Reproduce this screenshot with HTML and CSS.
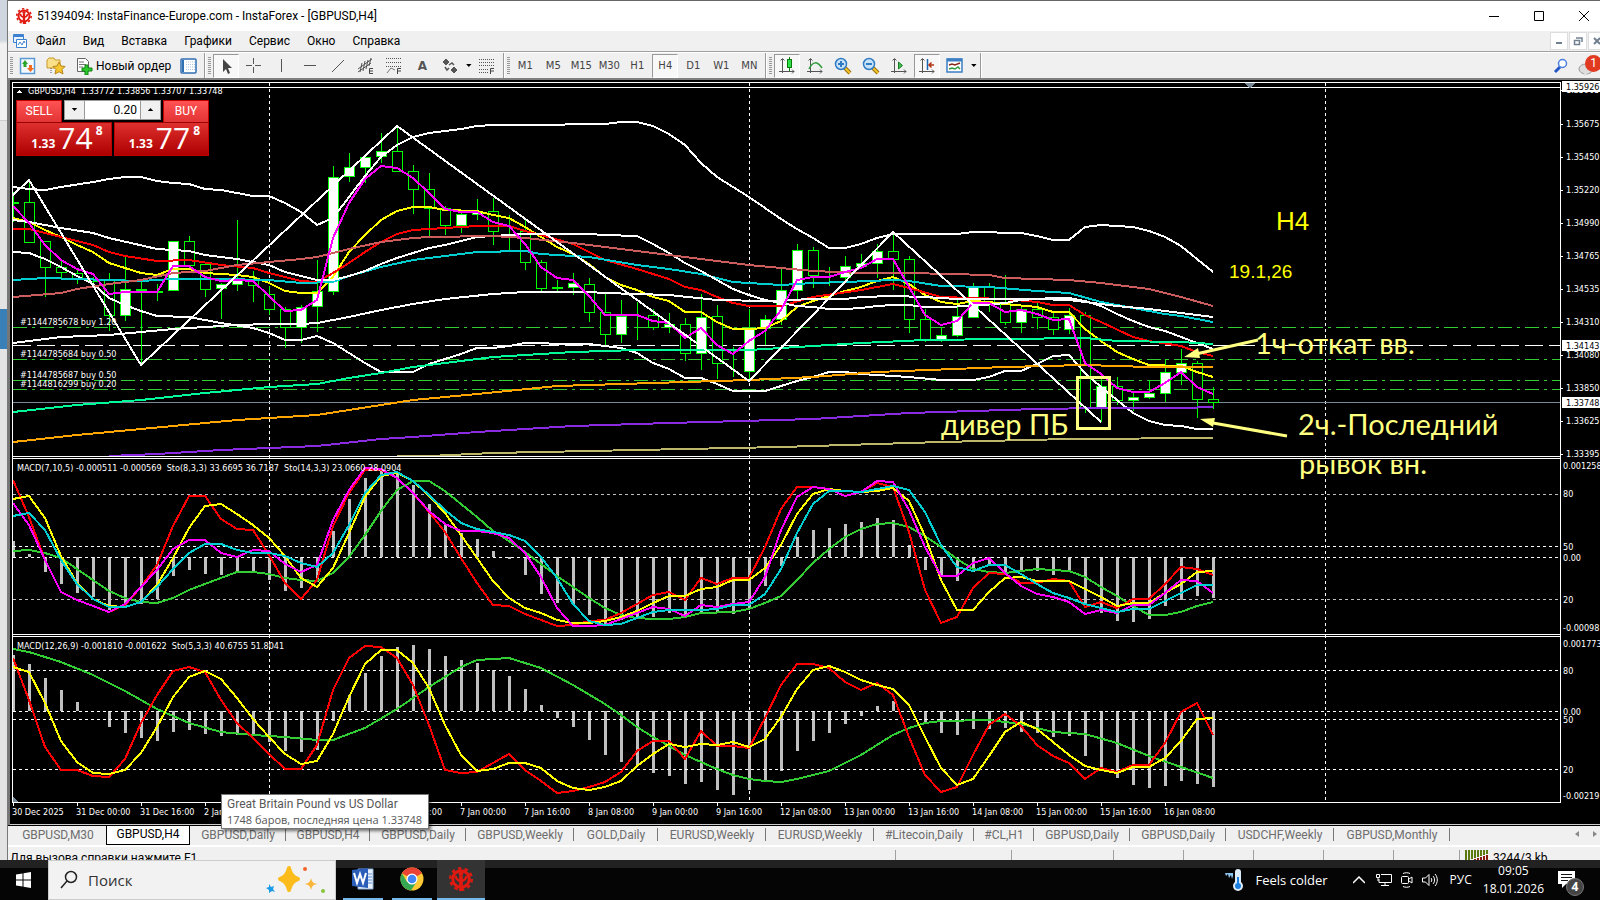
FILE: index.html
```html
<!DOCTYPE html>
<html lang="ru">
<head>
<meta charset="utf-8">
<title>InstaForex - [GBPUSD,H4]</title>
<link rel="stylesheet" href="styles.css">
</head>
<body>
<svg width="0" height="0" class="defs" aria-hidden="true">
  <defs>
    <symbol id="logo" viewBox="0 0 16 16"><g fill="none" stroke="#e01a10"><circle cx="8" cy="8" r="5.500" stroke-width="2"/><circle cx="8" cy="8" r="7.200" stroke-width="1.600" stroke-dasharray="2.300 2.220"/><path d="M8 16V6" stroke-width="2.400"/><path d="M8 9.500C6 9 4.500 8 4.500 6M8 9.500c2-.500 3.500-1.500 3.500-3.500" stroke-width="1.600"/></g><circle cx="8" cy="4.500" r="1.600" fill="#e01a10"/></symbol>
    <symbol id="axes" viewBox="0 0 18 18"><path d="M4.500 2v14M2.500 3.500l2-2 2 2M1 14.500h15M14 12.500l2 2-2 2" fill="none" stroke="#555"/></symbol>
    <symbol id="lens" viewBox="0 0 18 18"><path d="M11 11l5 5" stroke="#9a7010" stroke-width="4"/><path d="M11 11l5 5" stroke="#f2c52c" stroke-width="2"/><circle cx="7" cy="7" r="5.500" fill="#c9e4fa" stroke="#2f7bc4" stroke-width="1.500"/></symbol>
  </defs>
</svg>
<div class="screen">
  <div class="desktop"><i></i></div>
  <main class="window">
    <header class="title">
      <svg width="16" height="16"><use href="#logo"/></svg>
      <h1>51394094: InstaFinance-Europe.com - InstaForex - [GBPUSD,H4]</h1>
      <div class="wincontrols">
        <button aria-label="Свернуть"><svg width="12" height="12"><path d="M1 6.500h10" stroke="#000"/></svg></button>
        <button aria-label="Развернуть"><svg width="12" height="12"><path d="M1.500 1.500h9v9h-9z" fill="none" stroke="#000"/></svg></button>
        <button aria-label="Закрыть"><svg width="12" height="12"><path d="M1 1l10 10M11 1L1 11" stroke="#000"/></svg></button>
      </div>
    </header>
    <nav class="menu">
      <svg width="16" height="16" viewBox="0 0 16 16"><path d="M1.500 1.500h10v8h-10z" fill="#eaf3fd" stroke="#3c82d0"/><path d="M1 3h11" stroke="#3c82d0" stroke-width="2"/><path d="M4.500 6.500h10v8h-10z" fill="#fff" stroke="#3c82d0"/><path d="M6 12l2-3 2 3 2-4 1 2" fill="none" stroke="#3c82d0"/></svg>
      <button>Файл</button><button>Вид</button><button>Вставка</button><button>Графики</button><button>Сервис</button><button>Окно</button><button>Справка</button>
      <div class="mdi">
        <button aria-label="Свернуть окно"><svg width="10" height="10"><path d="M2 7h6" stroke="#708090" stroke-width="2"/></svg></button>
        <button aria-label="Восстановить окно"><svg width="10" height="10"><path d="M1.500 4.500h5v4h-5zM3 2h6v4" fill="none" stroke="#708090" stroke-width="1.500"/></svg></button>
        <button aria-label="Закрыть окно"><svg width="10" height="10"><path d="M2 2l6 6M8 2L2 8" stroke="#708090" stroke-width="2"/></svg></button>
      </div>
    </nav>
    <div class="toolbar">
      <i class="grip"></i>
      <button aria-label="Новый график"><svg width="18" height="18"><path d="M1.500 1.500h14v15h-14z" fill="#f3f9ff" stroke="#5b9bd5" stroke-width="1.500"/><path d="M3 7l3-4 3 4H7.500v3h-3V7z" fill="#2aa52a"/><path d="M8 11l3.500 4 3.500-4h-2V8h-3v3z" fill="#f06a20"/></svg></button>
      <button aria-label="Профили"><svg width="20" height="18"><path d="M1 3l2-2h5l1 2h5v8H1z" fill="#fbe08a" stroke="#c79a2a"/><path d="M5 11v6" stroke="#555" stroke-dasharray="1 1"/><path d="M13 5l2 4 4 .500-3 3 1 4.500-4-2.300L9 17l1-4.500-3-3 4-.500z" fill="#f7c530" stroke="#b58415"/></svg></button>
      <button class="order"><svg width="18" height="18"><path d="M1.500 1.500h8l3 3v10h-11z" fill="#fff" stroke="#666"/><path d="M3 5h5M3 7.500h7M3 10h4" stroke="#777"/><path d="M9 8h3v3h4v3h-4v4H9v-4H6v-3h3z" fill="#2bc92b" stroke="#128012"/></svg>Новый ордер</button>
      <button class="market" aria-label="Обзор рынка"><svg width="18" height="16"><rect x="1" y="1" width="15" height="14" rx="1" fill="#fff" stroke="#2f6fb3" stroke-width="1.500"/><path d="M3 2v12" stroke="#2f6fb3" stroke-width="2"/><path d="M6 4h9M6 6.500h9M6 9h9M6 11.500h9" stroke="#aac6e6" stroke-dasharray="1 1"/></svg></button>
      <i class="split"></i><i class="grip"></i>
      <button class="on" aria-label="Курсор"><svg width="18" height="18"><path d="M6 2v13l3-3 2 5 2-1-2-5h4z" fill="#444"/></svg></button>
      <button aria-label="Перекрестие"><svg width="18" height="18"><path d="M8.500 1v6M8.500 10v6M1 8.500h6M10 8.500h6" stroke="#555"/></svg></button>
      <button aria-label="Вертикальная линия"><svg width="18" height="18"><path d="M8.500 2v13" stroke="#555"/></svg></button>
      <button aria-label="Горизонтальная линия"><svg width="18" height="18"><path d="M3 8.500h12" stroke="#555"/></svg></button>
      <button aria-label="Трендовая линия"><svg width="18" height="18"><path d="M3 15L15 3" stroke="#555"/></svg></button>
      <button aria-label="Канал"><svg width="18" height="18"><path d="M1 12L15 2M1 15L14 6M3 15l2-9M6 14L8 4M9 12l2-9M12 9l2-8" stroke="#555" fill="none"/><path d="M16 11.500h-3.500v5H16M12.500 14H16" stroke="#444" fill="none"/></svg></button>
      <button aria-label="Фибоначчи"><svg width="18" height="18"><path d="M1 1.500h15M1 5.500h15M1 9.500h15" stroke="#555" stroke-dasharray="1 1"/><path d="M2 16l4-5 4 2" stroke="#777" fill="none"/><path d="M16 11.500h-3.500v5.500M12.500 14H16" stroke="#444" fill="none"/></svg></button>
      <button class="letter">A</button>
      <button aria-label="Стрелки"><svg width="18" height="18"><path d="M2 5l3-3 3 3-3 3zM10 13l3-3 3 3-3 3z" fill="#555" stroke="#555"/><path d="M4 10l2 3 2-2M8 8l3-2 2 2" fill="none" stroke="#555" stroke-width="1.500"/></svg></button><i class="caret"></i>
      <button aria-label="Линии Фибоначчи"><svg width="18" height="18"><path d="M1 2.500h15M1 5.500h15M1 8.500h15M1 12.500h9M1 15.500h9" stroke="#555" stroke-dasharray="1 1"/><path d="M16 11.500h-3.500v5.500M12.500 14H16" stroke="#444" fill="none"/></svg></button>
      <i class="split"></i><i class="grip"></i>
      <button>M1</button><button>M5</button><button>M15</button><button>M30</button><button>H1</button><button class="on">H4</button><button>D1</button><button>W1</button><button>MN</button>
      <i class="split"></i><i class="grip"></i>
      <button class="on" aria-label="Свечи"><svg width="18" height="18"><use href="#axes"/><path d="M11.500 0v14" stroke="#0a7a0a"/><rect x="9.500" y="2.500" width="4" height="8" fill="#2ee04a" stroke="#0a7a0a"/></svg></button>
      <button aria-label="Линия"><svg width="18" height="18"><use href="#axes"/><path d="M3 12c4-8 8-8 13-1" fill="none" stroke="#2f9a3c" stroke-width="1.500"/></svg></button>
      <button aria-label="Увеличить"><svg width="18" height="18"><use href="#lens"/><path d="M4 7h6M7 4v6" stroke="#2f7bc4" stroke-width="2"/></svg></button>
      <button aria-label="Уменьшить"><svg width="18" height="18"><use href="#lens"/><path d="M4 7h6" stroke="#2f7bc4" stroke-width="2"/></svg></button>
      <button aria-label="Автопрокрутка"><svg width="18" height="18"><use href="#axes"/><path d="M8.500 5l4 3.500-4 3.500z" fill="#3fc04e" stroke="#1a7a28"/></svg></button>
      <button class="on" aria-label="Сдвиг графика"><svg width="18" height="18"><use href="#axes"/><path d="M9.500 2v11" stroke="#1a66b0" stroke-width="1.500"/><path d="M16 8h-5M13.500 5.500L11 8l2.500 2.500" stroke="#b33415" stroke-width="1.500" fill="none"/></svg></button>
      <button aria-label="Шаблоны"><svg width="18" height="18"><rect x="1" y="2" width="15" height="13" fill="#fff" stroke="#3b7ec4" stroke-width="1.500"/><path d="M1 3h15" stroke="#3b7ec4" stroke-width="3"/><path d="M3 8l3-1 3 1 5-2" stroke="#8a2a1a" fill="none" stroke-width="1.500"/><path d="M3 12l3-1 3 1 3-2 2 2" stroke="#2f9a3c" fill="none" stroke-width="1.500"/></svg></button><i class="caret"></i>
      <i class="split"></i>
      <div class="tools-right">
        <button aria-label="Поиск"><svg width="16" height="16"><path d="M2 14l5-5" stroke="#2456c8" stroke-width="3"/><circle cx="9.500" cy="5.500" r="4" fill="#fff" stroke="#4a7fe0" stroke-width="1.500"/></svg></button>
        <button aria-label="Уведомления"><svg width="22" height="22"><ellipse cx="8" cy="14" rx="7" ry="5" fill="#ddd" stroke="#999"/><path d="M6 18v3l4-3" fill="#ddd"/></svg><b class="badge">1</b></button>
      </div>
    </div>
    <section class="chart">
      <svg id="plot" class="plot" role="img" aria-label="GBPUSD,H4"></svg>
      <svg id="scale" class="scale" role="img" aria-label="Шкала цен"></svg>
      <div class="trade">
        <button class="side sell"><span class="word">SELL</span><span class="quote"><small>1.33</small><strong>74</strong><sup>8</sup></span></button>
        <button class="side buy"><span class="word">BUY</span><span class="quote"><small>1.33</small><strong>77</strong><sup>8</sup></span></button>
        <div class="volume"><button aria-label="Меньше"><i class="caret"></i></button><input aria-label="Объём" value="0.20"><button aria-label="Больше"><i class="caret up"></i></button></div>
      </div>
      <div class="tip"><div>Great Britain Pound vs US Dollar</div><div class="bars">1748 баров, последняя цена 1.33748</div></div>
    </section>
    <nav class="tabs">
      <button class="w96">GBPUSD,M30</button><button class="w84 active">GBPUSD,H4</button><button class="w96">GBPUSD,Daily</button><button class="w84">GBPUSD,H4</button><button class="w96">GBPUSD,Daily</button><button class="w108">GBPUSD,Weekly</button><button class="w84">GOLD,Daily</button><button class="w108">EURUSD,Weekly</button><button class="w108">EURUSD,Weekly</button><button class="w100">#Litecoin,Daily</button><button class="w60">#CL,H1</button><button class="w96">GBPUSD,Daily</button><button class="w96">GBPUSD,Daily</button><button class="w108">USDCHF,Weekly</button><button class="w116">GBPUSD,Monthly</button>
      <span class="scroller"><i></i><i></i></span>
    </nav>
    <footer class="status">
      <span class="help">Для вызова справки нажмите F1</span><span class="c116"></span><span class="c102"></span><span class="c70"></span><span class="c70"></span><span class="c70"></span><span class="c70"></span><span class="c66"></span>
      <span class="traffic"><svg width="24" height="14"><path d="M1 0v11M4 0v10M7 0v9M10 0v8M13 0v7M16 0v6M19 0v5M22 0v4" stroke="#5a7a10" stroke-width="2"/><path d="M1 12v2M4 11v3M7 10v4M10 9v5M13 8v6M16 7v7M19 6v8M22 5v9" stroke="#8a1a10" stroke-width="2"/></svg>3244/3 kb</span>
    </footer>
  </main>
</div>
<div class="taskbar">
  <button class="start" aria-label="Пуск"><svg width="16" height="16"><path d="M0 2.500l6.500-1v6H0zM7.500 1.300L15 0v7.500H7.500zM0 8.500h6.500v6L0 13.500zM7.500 8.500H15V16l-7.500-1.300z" fill="#fff"/></svg></button>
  <label class="search"><svg width="18" height="20"><circle cx="11" cy="7" r="5.500" fill="none" stroke="#222" stroke-width="1.500"/><path d="M7 11l-6 7" stroke="#222" stroke-width="1.500"/></svg><input placeholder="Поиск" aria-label="Поиск">
    <svg width="62" height="30"><path d="M24 3q2 9 9 11-7 2-9 11-2-9-9-11 7-2 9-11z" fill="#fbbc1c" stroke="#fbbc1c" stroke-width="4" stroke-linejoin="round"/><path d="M46 13c1 4 2 5 6 6-4 1-5 2-6 6-1-4-2-5-6-6 4-1 5-2 6-6z" fill="#f9b83c"/><path d="M4 19l2 3 3-1-1 3 2 3-3-1-3 2v-3l-3-2 3-1z" fill="#1a9be8"/><circle cx="40" cy="4" r="2" fill="#f2642a"/><circle cx="58" cy="26" r="2" fill="#8ac43c"/></svg></label>
  <button class="app" aria-label="Word"><svg width="24" height="24"><path d="M7 2h15v20H7z" fill="#e8f0fb" stroke="#8fb2de"/><path d="M16 7h5M16 10h5M16 13h5M16 16h5" stroke="#5b8fd0"/><path d="M1 3l16-2v20L1 19z" fill="#2b5eb8"/><path d="M3 6l3 10L9 7l3 9 3-10" stroke="#fff" stroke-width="2" fill="none"/></svg></button>
  <button class="app" aria-label="Chrome"><svg width="24" height="24"><circle cx="12" cy="12" r="11.500" fill="#fcc934"/><path d="M2 6.200A11.500 11.500 0 0 1 22 6.200L12 12z" fill="#ea4335"/><path d="M2 6.200A11.500 11.500 0 0 0 11 23.500L16.500 15 12 12 7 15z" fill="#34a853"/><path d="M2 6.200h20L12 7z" fill="#ea4335"/><circle cx="12" cy="12" r="5.500" fill="#fff"/><circle cx="12" cy="12" r="4.300" fill="#4285f4"/></svg></button>
  <button class="app current" aria-label="InstaForex"><svg width="24" height="24"><use href="#logo"/></svg></button>
  <div class="tray">
    <button class="weather"><svg width="22" height="22"><path d="M1 4h8v3l-1 3-1-4-2 3-1-4-2 2z" fill="#8cc4f0"/><rect x="11" y="0" width="6" height="17" rx="3" fill="#dcebf8"/><circle cx="14" cy="17" r="5" fill="#dcebf8"/><circle cx="14" cy="17" r="3" fill="#1a7fe0"/><path d="M14 8v9" stroke="#1a7fe0" stroke-width="2"/></svg>Feels colder</button>
    <svg width="12" height="8"><path d="M0 7l6-6 6 6" fill="none" stroke="#fff" stroke-width="1.500"/></svg>
    <svg width="18" height="14"><path d="M7 1.500h10.500v8H5V6M7 12.500h8M11 10v3M2.500 1.500h3v3h-3zM4 5v3" fill="none" stroke="#fff"/></svg>
    <svg width="12" height="16"><rect x=".500" y="4.500" width="7" height="7" rx="1" fill="none" stroke="#fff"/><path d="M8 7l3-2v6L8 9M2 1.500c2-1 5-1 7 0M2 14.500c2 1 5 1 7 0" fill="none" stroke="#fff"/></svg>
    <svg width="16" height="14"><path d="M.500 5h3L7 1.500v11L3.500 9h-3zM9 5c1 1 1 3 0 4M11 3c2 2 2 6 0 8M13 1c3 3 3 9 0 12" fill="none" stroke="#fff"/></svg>
    <span class="lang">РУС</span>
    <time>09:05<br>18.01.2026</time>
    <button class="notes" aria-label="Уведомления"><svg width="18" height="18"><path d="M0 0h17v13H8l-4 4v-4H0z" fill="#fff"/><path d="M3 3.500h11M3 6.500h11M3 9.500h7" stroke="#111"/></svg><b>4</b></button>
  </div>
</div>
<script src="chart.js"></script>
</body>
</html>
```

FILE: styles.css
```css
* { box-sizing: border-box; }
body { margin: 0; height: 100vh; display: flex; flex-direction: column; overflow: hidden; font: 12px/16px Roboto, "Noto Sans", sans-serif; color: #000; background: #000; }
button { font: inherit; color: inherit; border: 0; padding: 0; background: none; }
svg { display: block; flex: none; }
.defs { position: absolute; }
.screen { flex: 1; min-height: 0; display: flex; overflow: hidden; }
.desktop { width: 7px; background: linear-gradient(#cfd6df 0 40px, #f0f0f0 44px 120px, #ccc 120px 121px, #e4e3e3 121px); padding-top: 309px; }
.desktop i { display: block; height: 40px; background: #3a80b8; }
.window { flex: 1; min-width: 0; border-left: 1px solid #777; display: flex; flex-direction: column; background: #f0f0f0; }
.window > * { flex: none; }

.title { height: 31px; border-top: 1px solid #666; background: #fff; display: flex; align-items: center; gap: 5px; padding-left: 8px; }
.title h1 { margin: 0; font-size: 12px; font-weight: 400; }
.wincontrols { margin-left: auto; margin-right: -6px; display: flex; }
.wincontrols button { width: 45px; height: 30px; display: grid; place-items: center; }

.menu { height: 21px; border-bottom: 1px solid #a0a0a0; display: flex; align-items: center; padding-left: 4px; }
.menu > button { margin-left: 17px; }
.menu > svg { margin-right: -9px; }
.mdi { margin-left: auto; display: flex; gap: 1px; margin-right: -6px; }
.mdi button { width: 18px; height: 18px; background: #fff; border: 1px solid #ddd; display: grid; place-items: center; }

.toolbar { height: 28px; border-top: 1px solid #fff; border-bottom: 2px solid #808080; display: flex; align-items: center; font: 10px/12px "DejaVu Sans", sans-serif; color: #444; }
.toolbar button { width: 28px; height: 24px; display: grid; place-items: center; position: relative; }
.toolbar .on { width: 26px; margin: 0 1px; background: #f8f8f8; border: 1px solid; border-color: #999 #fff #fff #999; }
.toolbar .order { width: auto; display: flex; align-items: center; gap: 2px; padding: 0 5px 0 6px; font: 12px/16px Roboto, sans-serif; color: #000; }
.toolbar .market { width: 26px; }
.toolbar .letter { font-weight: 700; font-size: 12px; color: #555; }
.grip { width: 3px; height: 18px; margin: 0 1px 0 2px; background: repeating-linear-gradient(#999 0 1px, #f0f0f0 1px 2px); }
.split { width: 2px; height: 25px; margin-left: 2px; border-left: 1px solid #999; border-right: 1px solid #fff; }
.caret { display: inline-block; width: 9px; height: 3px; background: #000; clip-path: polygon(20% 0, 80% 0, 50% 100%); }
.caret.up { clip-path: polygon(20% 100%, 80% 100%, 50% 0); }
.tools-right { margin-left: auto; display: flex; margin-right: -3px; }
.badge { position: absolute; right: 1px; top: 1px; width: 17px; height: 17px; border-radius: 50%; background: #e23a20; color: #fff; font: 12px/17px Roboto, sans-serif; text-align: center; }

.chart { position: relative; height: 745px; display: flex; background: #000; border-left: 2px solid #777; }
.plot { flex: 1; min-width: 0; height: 744px; }
.scale { width: 40px; height: 744px; }
.chart::after { content: ""; position: absolute; left: 0; right: 0; bottom: 0; height: 1px; background: #ccc; }
.chart text { font: 9px "DejaVu Sans Condensed", "Noto Sans", sans-serif; fill: #fff; }
.chart .note { font: 29px Lato, "Open Sans", sans-serif; fill: #ffff80; }
.chart .big { font: 26px "Liberation Sans", sans-serif; fill: #ff0; }
.chart .mid { font: 19px "Liberation Sans", sans-serif; fill: #ff0; }
.chart .dark { fill: #000; }

.trade { position: absolute; left: 6px; top: 20px; width: 193px; height: 56px; display: flex; gap: 2px; color: #fff; }
.side { flex: 1; display: flex; flex-direction: column; color: #fff; }
.side.buy { align-items: flex-end; }
.word { width: 46px; height: 22px; font-size: 12px; line-height: 20px; text-align: center; background: linear-gradient(#ff5252, #e23434); border: 1px solid #c00000; border-bottom: 0; }
.quote { width: 100%; height: 34px; display: flex; justify-content: flex-end; align-items: flex-end; gap: 3px; padding: 0 8px 5px 0; background: linear-gradient(#df3030, #ae0000); border: 1px solid #c00000; border-top-color: #900; }
.quote small { font: 700 12px/12px "Open Sans", sans-serif; }
.quote strong { font: 30px/24px "Open Sans", sans-serif; }
.quote sup { font: 700 12px/12px "Open Sans", sans-serif; align-self: flex-start; margin-top: 2px; }
.volume { position: absolute; left: 48px; top: 0; width: 97px; height: 20px; display: flex; background: #f0f0f0; border: 1px solid #999; }
.volume button { width: 19px; }
.volume .caret { vertical-align: 3px; }
.volume input { flex: 1; min-width: 0; border: 1px solid #999; border-width: 0 1px; font: 12px Roboto, sans-serif; text-align: right; padding: 0 3px; }

.tip { position: absolute; left: 211px; top: 714px; width: 208px; height: 35px; z-index: 2; background: #fff; border: 1px solid #767676; box-shadow: 2px 2px 3px #0008; color: #575757; line-height: 15px; padding: 2px 5px; white-space: nowrap; }
.bars { font-family: "Open Sans", sans-serif; font-size: 11px; }

.tabs { height: 21px; border-top: 1px solid #000; border-bottom: 1px solid #fff; display: flex; color: #6d6d6d; padding-left: 2px; }
.tabs button { height: 19px; line-height: 16px; position: relative; white-space: nowrap; padding-bottom: 2px; }
.tabs button::after { content: ""; position: absolute; right: 0; top: 2px; width: 1px; height: 13px; background: #777; }
.tabs .active { background: #fff; color: #000; border: 1px solid #000; border-top: 0; }
.tabs .active::after, .tabs button:first-child::after { display: none; }
.w60 { width: 60px; } .w84 { width: 84px; } .w96 { width: 96px; } .w100 { width: 100px; } .w108 { width: 108px; } .w116 { width: 116px; }
.scroller { margin-left: auto; display: flex; gap: 14px; padding: 5px 3px; }
.scroller i { width: 4px; height: 6px; background: #888; clip-path: polygon(100% 0, 100% 100%, 0 50%); }
.scroller i + i { clip-path: polygon(0 0, 0 100%, 100% 50%); }

.status { height: 24px; display: flex; border-top: 1px solid #fff; padding-top: 3px; }
.status span { border-left: 1px solid #a0a0a0; }
.status .help { flex: 1; border: 0; padding-left: 2px; }
.status .traffic { width: 141px; display: flex; gap: 4px; padding-left: 5px; }
.c116 { width: 116px; } .c102 { width: 102px; } .c70 { width: 70px; } .c66 { width: 66px; }

.taskbar { flex: none; height: 40px; display: flex; color: #fff; background: linear-gradient(#222 8px, #050505 8px); }
.start { width: 48px; padding-left: 16px; }
.search { width: 288px; background: #f2f2f2; border: 1px solid #ccc; display: flex; align-items: center; padding: 0 8px 0 11px; }
.search input { flex: 1; min-width: 0; border: 0; background: none; font: 15px "Open Sans", sans-serif; padding: 0 0 0 10px; }
.search input::placeholder { color: #333; opacity: 1; }
.app { width: 40px; margin: 0 0 0 7px; border-bottom: 2px solid #76b9ed; display: grid; place-items: center; }
.app + .app { margin-left: 9px; }
.app + .app.current { width: 48px; margin-left: 5px; background: #333; }
.tray { margin-left: auto; display: flex; align-items: center; gap: 9px; padding-right: 16px; font-family: "Open Sans", sans-serif; }
.weather { display: flex; align-items: center; gap: 10px; font-size: 13px; margin-right: 16px; }
.lang { margin-left: 3px; }
.tray time { text-align: center; line-height: 18px; margin-left: 2px; margin-right: 5px; }
.notes { position: relative; width: 26px; height: 22px; }
.notes b { position: absolute; right: 0; bottom: -5px; width: 18px; height: 18px; border-radius: 50%; background: #444; border: 1px solid #777; font: 700 12px/16px "Open Sans", sans-serif; }
```

FILE: chart.js
```js
const STEP = 16, X0 = 13;
const bx = k => X0 + STEP * k;

// high, top, bottom, low, filled
const candles = [
[192,202,203,222,0],[180,202,242,243,0],[241,241,267,297,0],[260,267,272,280,0],[270,273,279,284,0],[277,279,281,284,0],[273,280,315,331,0],[257,289,315,321,1],[280,289,290,363,0],[284,291,292,301,0],
[241,241,290,291,1],[236,241,265,267,0],[263,264,289,297,0],[283,284,288,319,1],[220,279,284,291,1],[271,280,285,302,0],[286,294,309,315,0],[307,309,327,348,0],[305,307,327,343,1],[260,291,306,332,1],
[166,177,291,295,1],[153,167,176,182,1],[155,157,167,183,1],[133,151,156,163,1],[127,151,171,172,0],[165,171,189,214,0],[173,189,208,236,0],[206,208,225,235,0],[210,214,225,233,1],[199,211,214,220,1],
[198,211,231,245,0],[215,231,231,250,0],[220,231,262,270,0],[260,262,288,292,0],[280,287,288,291,0],[273,283,287,295,1],[278,284,312,322,0],[294,312,334,346,0],[300,316,334,343,1],[302,315,315,340,0],
[309,315,327,330,0],[313,324,327,333,1],[318,324,353,361,0],[294,317,353,370,1],[305,316,363,379,0],[347,363,363,377,0],[309,329,371,379,1],[315,319,328,345,1],[268,290,319,325,1],[244,250,290,300,1],
[247,250,275,288,0],[267,276,276,286,0],[256,266,277,280,1],[254,263,266,268,1],[244,251,263,278,1],[233,251,259,290,0],[256,259,319,333,0],[309,319,339,342,0],[327,335,339,342,1],[299,316,335,337,1],
[283,286,317,318,1],[283,286,303,312,0],[275,303,322,325,0],[306,309,322,333,1],[303,309,317,329,0],[313,317,329,335,0],[308,315,329,334,1],[312,315,407,413,0],[377,386,407,422,1],[377,386,400,405,0],
[392,397,400,411,1],[380,393,397,399,1],[359,372,393,402,1],[349,363,372,385,1],[361,363,399,418,0],[387,399,402,409,0]];

// Each series is a flat list of bar index, y.
const main = [
['#fff',[0,187,1,189,2,190,3,187,5,182,6,179,7,177,8,177,9,181,10,183,11,184,12,189,13,190,14,193,15,196,16,196,17,203,18,212,19,225,20,218,21,197,22,176,23,157,24,145,25,137,26,133,27,131,28,129,29,126,30,125,34,125,35,124,37,124,38,122,39,122,40,126,41,134,42,145,43,163,44,177,45,187,46,197,47,208,48,219,49,229,50,238,51,248,52,248,53,244,54,238,55,234,59,234,60,232,61,232,62,233,63,233,64,236,65,240,66,240,67,227,68,225,69,226,70,227,71,231,72,237,73,246,74,259,75,272]],
['#fff',[0,252,1,253,2,259,3,267,4,276,5,284,6,298,7,305,8,311,9,316,11,317,12,320,13,323,15,328,16,333,17,340,18,340,19,336,20,343,21,353,22,363,23,372,25,372,26,364,27,359,28,354,29,348,30,348,31,346,32,343,33,343,34,344,36,344,37,346,38,348,39,353,40,363,41,369,42,378,43,378,44,384,45,391,47,391,48,386,49,381,50,377,51,372,52,372,53,374,54,375,56,377,58,380,60,380,61,377,62,371,63,371,64,364,65,356,66,355,67,373,68,387,69,400,70,413,71,421,72,425,73,426,74,429,75,429]],
['#ff0',[0,218,1,222,2,230,3,237,4,245,5,252,6,263,7,268,8,273,9,275,10,269,11,269,12,273,14,275,15,277,16,283,17,291,18,293,19,293,20,277,21,252,22,235,23,220,24,211,25,207,26,207,27,210,29,211,30,215,31,218,32,227,33,237,34,247,35,254,36,264,37,277,38,285,39,290,40,297,41,301,42,312,43,312,44,322,45,329,46,329,47,328,48,321,49,307,50,301,51,296,52,291,53,287,54,281,55,277,56,284,57,295,58,302,59,304,60,301,61,302,62,304,64,307,65,312,66,312,67,329,68,341,69,352,70,359,71,365,73,366,74,372,75,377]],
['#f00',[0,229,1,229,3,237,5,245,6,252,7,256,9,261,11,260,13,265,15,268,16,273,17,277,18,281,19,282,20,273,21,263,22,252,23,242,24,234,25,230,26,229,28,227,29,226,31,226,32,231,33,235,35,244,37,260,39,269,41,279,42,287,43,290,44,297,45,303,46,306,48,306,50,297,53,290,55,284,56,288,58,297,62,299,64,302,65,305,66,305,67,315,68,322,70,337,71,341,73,346,74,352,75,356]],
['#00ced1',[0,280,2,278,8,281,10,279,13,279,16,280,18,283,20,282,21,276,23,267,25,260,27,256,29,252,32,251,33,254,36,257,39,265,41,269,43,274,45,282,48,285,50,283,52,282,55,280,56,281,58,286,61,287,64,291,66,293,68,302,70,308,72,314,73,316,75,322]],
['#fff',[0,220,1,222,2,225,3,228,5,233,6,238,9,249,11,251,12,255,14,259,16,265,17,272,18,276,19,280,20,280,21,276,22,271,23,264,24,258,25,253,26,248,27,245,28,241,29,237,31,235,32,234,36,234,37,235,39,236,40,244,41,253,42,263,43,271,44,280,45,289,46,295,47,300,48,303,49,306,50,307,51,309,52,309,53,308,54,306,55,305,56,305,57,307,58,307,60,306,62,303,63,300,64,299,65,298,66,298,67,301,68,306,69,314,70,321,71,327,72,331,73,337,74,343,75,349]],
['#fff',[0,343,1,341,3,337,6,335,8,332,10,329,12,327,14,325,16,324,18,324,19,323,21,317,23,310,25,304,27,299,30,294,32,292,36,292,37,293,41,295,44,300,47,301,50,299,52,299,53,297,55,296,57,297,59,299,64,299,66,300,67,302,69,306,71,309,73,313,75,317]],
['#cd5c5c',[0,297,3,293,4,289,6,284,8,280,10,273,12,271,14,265,16,262,18,259,19,257,21,249,23,242,25,238,26,237,30,236,32,238,35,243,38,249,42,257,46,265,50,271,53,273,56,273,61,275,62,278,66,280,68,283,71,289,73,297,75,306]],
['#00fa9a',[0,412,4,405,8,400,12,393,16,387,19,384,21,378,23,373,25,367,27,363,30,357,35,352,39,350,46,350,50,346,53,343,57,340,62,339,67,338,69,341,73,342,75,344]],
['#ffa500',[0,442,4,435,8,429,12,423,14,420,19,415,25,400,29,394,34,386,40,383,46,380,50,377,54,372,62,367,67,365,71,367,75,367]],
['#8a2be2',[6,456,9,454,13,450,19,446,23,439,25,437,29,432,35,426,41,423,50,419,56,413,64,409,68,408,73,408,75,407]],
['#bdb76b',[24,456,26,456,30,453,36,451,42,449,48,447,50,446,58,442,66,439,75,438]],
['#f0f',[0,206,1,223,2,245,3,260,4,269,5,274,6,294,7,292,9,292,10,266,11,266,12,277,13,281,14,280,15,281,16,296,17,311,18,310,19,300,20,238,21,203,22,179,23,166,24,168,25,178,26,193,27,209,28,212,29,212,30,222,31,226,32,244,33,267,34,278,35,280,36,296,37,315,39,315,40,321,41,323,42,338,43,328,44,345,45,354,46,341,47,331,48,310,49,280,50,277,51,277,52,272,53,268,54,259,55,259,56,287,57,315,58,325,59,321,60,303,61,303,62,312,63,310,64,314,65,320,66,319,67,363,68,374,69,388,70,392,71,392,72,383,73,372,74,387,75,394]],
['#fff',[0,195,1,180,8,365,24,126,46,381,55,232,68,422]]];

const hist1 = [541,554,572,584,593,597,610,606,604,599,576,570,574,575,573,572,580,591,588,582,531,499,478,470,473,485,504,525,533,539,551,559,575,594,603,605,615,626,620,617,617,613,617,613,613,614,609,586,566,537,530,528,524,522,518,520,545,570,577,581,572,565,573,571,571,575,572,604,613,621,622,619,606,600,596,598];
const hist2 = [655,664,678,690,702,711,727,733,738,741,732,730,734,736,735,735,742,751,752,750,721,695,673,656,647,645,649,656,660,663,670,676,689,705,718,727,740,755,762,765,773,776,784,782,790,795,790,782,771,751,741,733,724,716,706,701,711,724,733,735,729,729,728,732,733,737,736,756,770,778,785,788,786,781,784,787];
const seq = a => a.flatMap((y, k) => [k, y]);
const osc1 = [
['#32cd32',[0,551,1,550,2,553,3,558,4,569,5,580,6,591,7,598,8,602,9,603,10,598,11,590,12,584,13,578,14,572,15,572,16,574,17,578,18,580,19,581,20,573,21,557,22,535,23,511,24,490,25,481,26,481,27,491,28,504,29,517,30,531,31,541,32,552,33,564,34,576,35,587,36,598,37,608,38,615,39,618,40,619,41,619,42,617,43,613,45,612,46,609,47,603,48,596,49,580,50,563,51,549,52,537,53,529,54,524,55,523,56,527,57,536,58,547,59,559,60,569,61,572,62,573,63,571,64,569,65,570,66,571,67,577,68,587,69,596,70,606,71,615,72,615,73,612,74,606,75,602]],
['#f00',seq([480,517,560,592,600,606,612,605,587,565,526,496,496,519,529,530,555,583,599,580,526,493,470,470,478,493,512,532,558,583,605,606,614,620,626,625,621,620,613,604,595,592,600,578,584,578,578,547,509,487,487,489,496,492,483,487,532,590,623,617,588,573,574,583,583,579,581,607,602,608,599,599,584,567,569,575])],
['#ff0',seq([499,496,518,556,583,599,606,607,602,585,558,528,506,504,514,525,538,556,578,587,568,533,497,476,473,481,496,513,535,558,581,598,608,613,620,623,623,621,617,611,603,596,596,589,587,580,580,568,545,514,494,489,491,492,491,488,501,536,580,610,610,592,578,577,581,581,581,589,597,606,603,603,593,584,572,571])],
['#f0f',seq([503,525,560,592,600,606,612,604,587,570,549,540,540,553,557,550,551,564,572,565,520,490,468,469,478,493,511,524,531,531,533,538,553,577,608,626,626,625,619,613,607,609,616,605,607,604,602,577,530,497,487,489,496,492,481,482,510,547,576,576,563,558,573,586,594,597,602,614,610,613,605,605,593,580,581,593])],
['#00ced1',seq([516,513,530,560,584,599,607,607,602,587,569,553,544,544,550,553,553,556,563,567,553,525,493,475,472,481,495,510,523,529,532,535,541,557,578,604,621,625,624,618,612,610,610,610,609,605,605,594,569,533,504,491,491,492,489,486,490,512,545,567,571,565,565,574,584,593,598,604,608,612,609,609,601,593,585,585])]];
const osc2 = [
['#32cd32',[0,649,1,652,3,662,5,675,7,691,9,709,11,723,13,732,15,735,17,737,19,740,20,740,22,728,24,709,26,687,28,667,29,660,31,658,33,668,35,685,37,704,38,715,39,727,40,737,42,755,44,769,45,775,46,779,47,781,48,782,49,779,51,771,53,755,55,735,56,728,57,723,58,721,61,720,63,724,65,732,67,734,69,743,71,756,73,767,75,778]],
['#f00',seq([658,700,747,770,770,776,777,759,723,695,671,667,672,700,723,738,754,769,769,745,690,658,646,647,658,685,725,770,773,772,763,754,770,781,793,791,787,782,772,751,741,741,759,731,746,746,748,718,685,664,664,668,682,690,683,695,737,775,792,787,755,725,714,726,745,756,763,779,768,772,765,765,743,712,703,735])],
['#ff0',seq([667,672,703,741,762,773,774,770,753,727,697,677,671,679,698,719,737,754,764,761,734,697,664,650,650,663,688,725,755,771,769,763,763,768,781,788,790,787,781,766,754,744,747,744,745,742,747,739,717,689,670,666,672,680,685,689,705,737,768,785,779,756,732,722,729,742,755,766,770,773,767,767,758,741,719,718])]];

const FAR = 4000;
const seg = (x1, y1, x2, y2, c, w = 1, d = '') => `<line x1="${x1}" y1="${y1}" x2="${x2}" y2="${y2}" stroke="${c}" stroke-width="${w}" stroke-dasharray="${d}"/>`;
const hline = (y, c, d) => seg(13, y + .5, FAR, y + .5, c, 1, d);
const text = (x, y, s, cls = '') => `<text x="${x}" y="${y}" class="${cls}">${s}</text>`;
const curve = ([c, a]) => {
  let p = '';
  for (let i = 0; i < a.length; i += 2) p += `${bx(a[i])},${a[i + 1]} `;
  return `<polyline points="${p}" fill="none" stroke="${c}" stroke-width="2"/>`;
};
const bars = (h, base) => h.map((y, k) => `<rect x="${bx(k) - 1}" y="${Math.min(y, base)}" width="3" height="${Math.abs(y - base)}" fill="#c0c0c0"/>`).join('');
const body = ([hi, t, b, lo, f], k) => {
  const x = bx(k) + .5;
  return seg(x, hi, x, lo, '#0f0') + `<rect x="${x - 5}" y="${t + .5}" width="10" height="${b - t}" fill="${f ? '#fff' : '#000'}" stroke="#0f0"/>`;
};

let s = '<defs>' + [[1, 83, 373], [2, 460, 174], [3, 637, 165]].map(([n, y, h]) => `<clipPath id="p${n}"><rect x="13" y="${y}" width="${FAR}" height="${h}"/></clipPath>`).join('') + '</defs>';
s += '<g transform="translate(-10 -80)" shape-rendering="crispEdges">';
s += [269, 749, 1325].map(x => seg(x + .5, 83, x + .5, 800, '#fff', 1, '3 3')).join('');
s += '<g clip-path="url(#p1)">' + [327, 359, 380, 389].map(y => hline(y, '#32cd32', '14 5 3 5')).join('') + hline(345, '#fff', '18 6') + hline(402, '#778899', '');
s += candles.map(body).join('') + main.map(curve).join('') + '</g>';
s += '<g clip-path="url(#p2)">' + bars(hist1, 557) + hline(494, '#c0c0c0', '3 3') + hline(546, '#fff', '3 3') + hline(557, '#fff', '3 3') + hline(599, '#c0c0c0', '3 3') + osc1.map(curve).join('') + '</g>';
s += '<g clip-path="url(#p3)">' + bars(hist2, 711) + [670, 711, 719, 769].map(y => hline(y, '#fff', '3 3')).join('') + osc2.map(curve).join('') + '</g>';
s += [82, 87, 456, 458, 634, 636, 802].map(y => seg(12, y + .5, FAR, y + .5, '#fff')).join('') + seg(12.5, 82, 12.5, 802, '#fff');
s += '<path d="M1244 83h11l-5 5zM13 802v-6l5 6z" fill="#778899"/><path d="M16 93l3-3 4 3z" fill="#fff"/>';
s += '</g><g transform="translate(-10 -80)">';
s += text(28, 94, 'GBPUSD,H4&#160; 1.33772 1.33856 1.33707 1.33748');
s += text(20, 325, '#1144785678 buy 1.20') + text(20, 357, '#1144785684 buy 0.50') + text(20, 378, '#1144785687 buy 0.50') + text(20, 387, '#1144816299 buy 0.20');
s += text(17, 471, 'MACD(7,10,5) -0.000511 -0.000569&#160; Sto(8,3,3) 33.6695 36.7187&#160; Sto(14,3,3) 23.0660 28.0904');
s += text(17, 649, 'MACD(12,26,9) -0.001810 -0.001622&#160; Sto(5,3,3) 40.6755 51.8041');
s += text(1276, 230, 'H4', 'big') + text(1229, 278, '19.1,26', 'mid');
s += text(941, 435, 'дивер ПБ', 'note') + text(1255, 354, '1ч-откат вв.', 'note') + text(1298, 435, '2ч.-Последний', 'note');
s += '<g clip-path="url(#p2)">' + text(1299, 474, 'рывок вн.', 'note') + '</g>';
s += '<g fill="none" stroke="#ffff80" stroke-width="3"><rect x="1077.500" y="377.500" width="32" height="51"/><path d="M1258 340l-62 14M1287 436l-74-13"/></g><path d="M1184 357l14-9 2 10zM1200 419l15-1-2 9z" fill="#ffff80"/>';
// The tooltip hides the labels at 5 Jan, so those two slots only carry a tick.
const times = ['30 Dec 2025', '31 Dec 00:00', '31 Dec 16:00', '2 Jan 08:00', '', '', '6 Jan 08:00', '7 Jan 00:00', '7 Jan 16:00', '8 Jan 08:00', '9 Jan 00:00', '9 Jan 16:00', '12 Jan 08:00', '13 Jan 00:00', '13 Jan 16:00', '14 Jan 08:00', '15 Jan 00:00', '15 Jan 16:00', '16 Jan 08:00'];
times.forEach((t, i) => { const x = 13 + 64 * i; s += seg(x + .5, 802, x + .5, 806, '#fff') + text(x - 1, 815, t); });
document.getElementById('plot').innerHTML = s + '</g>';

let q = '<g transform="translate(-1560 -80)">' + seg(1560.5, 82, 1560.5, 803, '#fff');
const mark = (y, t) => seg(1561, y + .5, 1563, y + .5, '#fff') + text(1566, y + 3, t);
[[90, '1.35905'], [124, '1.35675'], [157, '1.35450'], [190, '1.35220'], [223, '1.34990'], [256, '1.34765'], [289, '1.34535'], [322, '1.34310'], [355, '1.34080'], [388, '1.33850'], [421, '1.33625'], [454, '1.33395']].forEach(a => q += mark(...a));
[[86, '1.35926'], [345, '1.34143'], [402, '1.33748']].forEach(([y, t]) => q += `<rect x="1562" y="${y - 5}" width="38" height="11" fill="#fff"/>` + text(1566, y + 4, t, 'dark'));
[[469, '0.001258'], [497, '80'], [550, '50'], [561, '0.00'], [603, '20'], [631, '-0.00098'], [647, '0.001773'], [674, '80'], [715, '0.00'], [723, '50'], [773, '20'], [799, '-0.00219']].forEach(([y, t]) => q += text(1563, y, t));
document.getElementById('scale').innerHTML = q + '</g>';
```
